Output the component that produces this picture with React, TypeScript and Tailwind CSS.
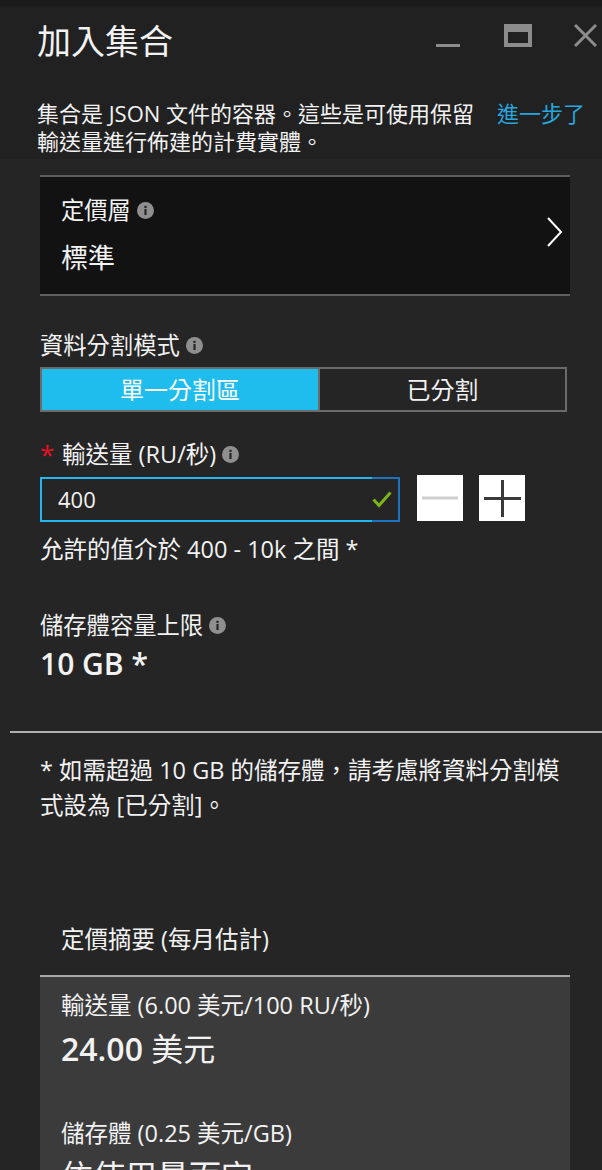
const InfoIcon = () => (
  <svg width="17" height="17" viewBox="0 0 17 17" className="ml-[6px] shrink-0">
    <circle cx="8.5" cy="8.5" r="8.5" fill="#8f8f8f" />
    <rect x="7.4" y="7" width="2.2" height="6" fill="#262626" />
    <rect x="7.4" y="3.8" width="2.2" height="2.2" fill="#262626" />
  </svg>
);

const Label = ({ children }: { children: React.ReactNode }) => (
  <div className="flex items-center text-[23.3px] leading-[28px]">{children}</div>
);

const App = () => {
  return (
    <div
      className="w-[602px] h-[1170px] overflow-hidden bg-[#252525] text-[#f2f2f2]"
      style={{ fontFamily: '"Open Sans", "Noto Sans CJK TC", sans-serif' }}
    >
      <div className="h-[6px] bg-[#1b1b1b]" />

      {/* blade header */}
      <header className="bg-[#212121] pl-[37px] pr-[5px] pt-[15px] pb-[4px]">
        <div className="flex items-start">
          <h1 className="text-[34px] leading-[40px] font-normal">加入集合</h1>
          <div className="ml-auto flex items-start pt-[3px]">
            <svg width="24" height="24" viewBox="0 0 24 24" className="mr-[44px]">
              <rect x="0" y="20" width="24" height="3" fill="#8c8c8c" />
            </svg>
            <svg width="28" height="23" viewBox="0 0 28 23" className="mr-[42px]">
              <rect x="0" y="0" width="28" height="23" fill="#8c8c8c" />
              <rect x="4" y="8" width="20" height="11" fill="#212121" />
            </svg>
            <svg width="23" height="23" viewBox="0 0 23 23">
              <path d="M1 1 L22 22 M22 1 L1 22" stroke="#8c8c8c" strokeWidth="3" />
            </svg>
          </div>
        </div>
        <div className="mt-[38px] flex text-[22px] leading-[28px]">
          <p className="w-[460px]">
            集合是 JSON 文件的容器。這些是可使用保留
            <br />
            輸送量進行佈建的計費實體。
          </p>
          <a className="text-[#27a6df] whitespace-nowrap">進一步了</a>
        </div>
      </header>

      <main className="px-[40px]">
        {/* pricing tier */}
        <div className="mt-[16px] w-[530px] h-[121px] bg-[#121212] border-y-2 border-[#5e5e5e] pl-[21px] pr-[7px] flex items-center">
          <div className="flex-1 pt-[18px] pb-[18px]">
            <Label>
              定價層
              <InfoIcon />
            </Label>
            <div className="mt-[17px] text-[27px] leading-[34px]">標準</div>
          </div>
          <svg width="16" height="30" viewBox="0 0 16 30" className="mb-[8px]">
            <path d="M1 1 L14 15 L1 29" stroke="#ffffff" strokeWidth="2" fill="none" />
          </svg>
        </div>

        {/* partition mode */}
        <div className="mt-[35px]">
          <Label>
            資料分割模式
            <InfoIcon />
          </Label>
        </div>
        <div className="mt-[8px] w-[527px] h-[45px] flex border-2 border-[#6b6b6b] text-[24px]">
          <div className="w-[276px] bg-[#1fbcee] flex items-center justify-center text-white">單一分割區</div>
          <div className="flex-1 border-l-2 border-[#6b6b6b] flex items-center justify-center">已分割</div>
        </div>

        {/* throughput */}
        <div className="mt-[28px] flex items-center text-[23.5px] leading-[28px]">
          <span className="text-[#e81123] w-[22px] text-[26px]">*</span>
          輸送量 (RU/秒)
          <InfoIcon />
        </div>
        <div className="mt-[9px] flex items-start">
          <div className="w-[360px] h-[45px] flex">
            <div className="flex-1 border-l-2 border-y-2 border-[#22b7ee] pl-[16px] flex items-center text-[22px]">
              400
            </div>
            <div className="w-[28px] border-y-2 border-r-2 border-[#1d72c0] flex items-center">
              <svg width="20" height="17" viewBox="0 0 20 17">
                <path d="M1.5 8.5 L7 14.5 L18.5 1.5" stroke="#7cb518" strokeWidth="3" fill="none" />
              </svg>
            </div>
          </div>
          <button className="ml-[17px] -mt-[2px] w-[46px] h-[46px] bg-white flex items-center justify-center">
            <svg width="36" height="4" viewBox="0 0 36 4">
              <rect x="0" y="0.5" width="36" height="3" fill="#cfcfcf" />
            </svg>
          </button>
          <button className="ml-[16px] -mt-[2px] w-[46px] h-[46px] bg-white flex items-center justify-center">
            <svg width="37" height="37" viewBox="0 0 37 37">
              <rect x="0" y="17" width="37" height="3" fill="#3a3a3a" />
              <rect x="17" y="0" width="3" height="37" fill="#3a3a3a" />
            </svg>
          </button>
        </div>
        <div className="mt-[13px] text-[23.5px] leading-[28px]">允許的值介於 400 - 10k 之間 *</div>

        {/* storage */}
        <div className="mt-[48px]">
          <Label>
            儲存體容量上限
            <InfoIcon />
          </Label>
        </div>
        <div className="mt-[7px] text-[30px] leading-[36px] font-semibold">10 GB *</div>
      </main>

      <hr className="mt-[49px] ml-[10px] border-0 h-[2px] bg-[#b0b0b0]" />

      <div className="px-[40px]">
        <p className="mt-[20px] text-[23.5px] leading-[35px] whitespace-nowrap">
          * 如需超過 10 GB 的儲存體，請考慮將資料分割模
          <br />
          式設為 [已分割]。
        </p>

        {/* pricing summary */}
        <div className="mt-[102px] pl-[21px] text-[23.5px] leading-[28px]">定價摘要 (每月估計)</div>
        <div className="mt-[22px] w-[530px] bg-[#3b3b3b] border-t-2 border-[#a6a6a6] pl-[21px] pt-[14px] pb-[20px]">
          <div className="text-[23.5px] leading-[28px]">輸送量 (6.00 美元/100 RU/秒)</div>
          <div className="mt-[12px] text-[32px] leading-[36px]">
            <span className="font-semibold">24.00</span> 美元
          </div>
          <div className="mt-[52px] text-[23.5px] leading-[28px]">儲存體 (0.25 美元/GB)</div>
          <div className="mt-[11px] text-[32px] leading-[36px]">依使用量而定</div>
        </div>
      </div>
    </div>
  );
};

export default App;
